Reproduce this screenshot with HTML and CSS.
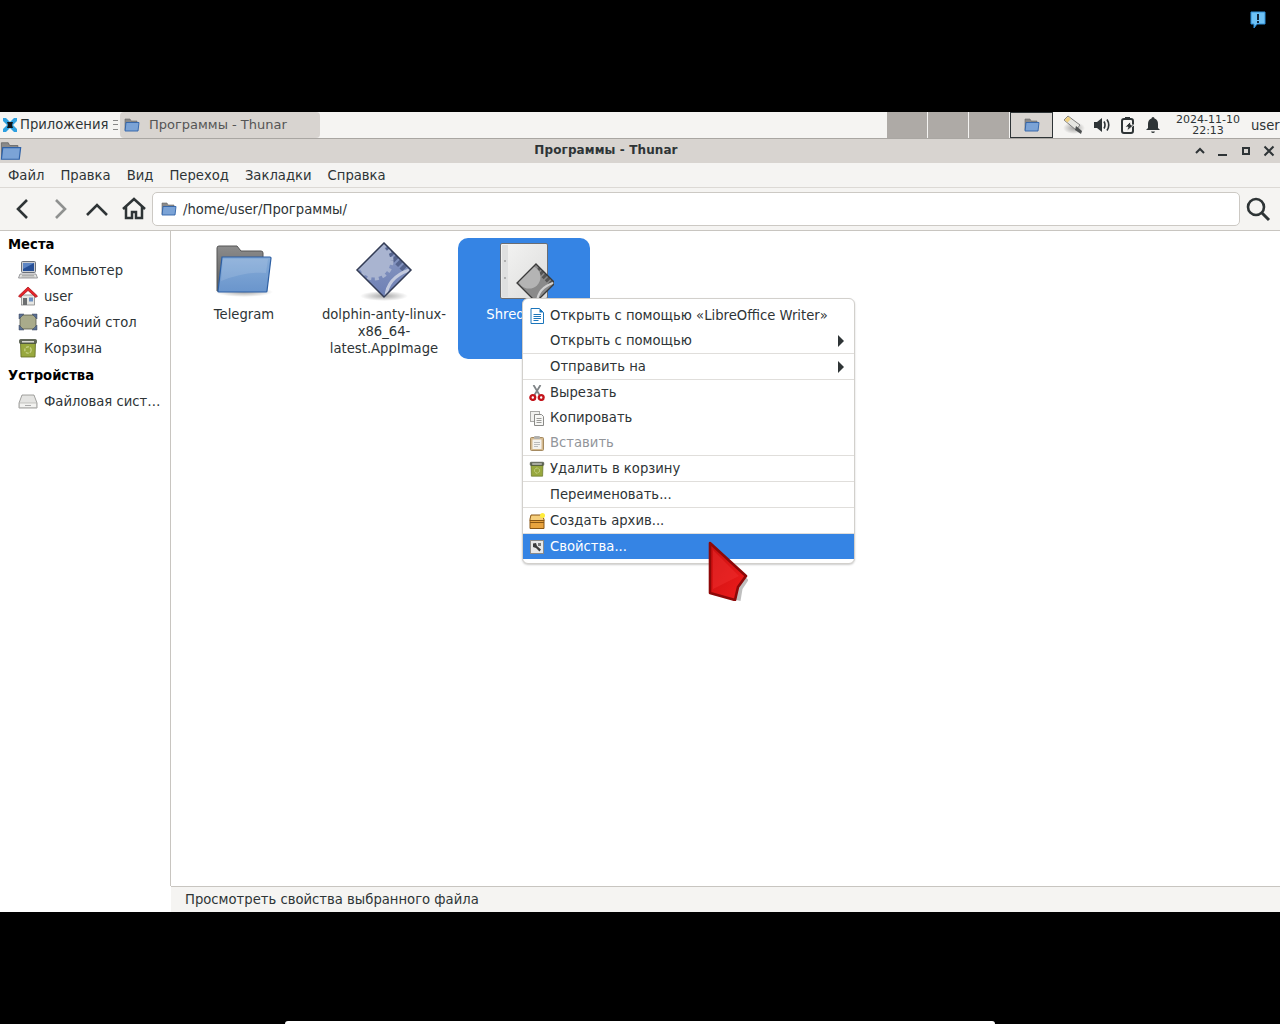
FILE: index.html
```html
<!DOCTYPE html>
<html lang="en">

<head>
    <meta charset="UTF-8">
    <meta name="viewport" content="width=device-width, initial-scale=1.0">
    <title>Программы - Thunar</title>
    <link rel="stylesheet" href="styles.css">
</head>

<body>

    <svg class="defs" xmlns="http://www.w3.org/2000/svg">
        <defs>
            <linearGradient id="gFolderBack" x1="0" y1="0" x2="0" y2="1">
                <stop offset="0" stop-color="#8c8c8c" />
                <stop offset="1" stop-color="#5c5c5c" />
            </linearGradient>
            <linearGradient id="gFolderFront" x1="0" y1="0" x2="0" y2="1">
                <stop offset="0" stop-color="#86acd8" />
                <stop offset="1" stop-color="#6a95cc" />
            </linearGradient>
            <linearGradient id="gApp" x1="0" y1="0" x2="0" y2="1">
                <stop offset="0" stop-color="#8d9cc4" />
                <stop offset="1" stop-color="#6d7fb4" />
            </linearGradient>
            <linearGradient id="gPage" x1="0" y1="0" x2="1" y2="1">
                <stop offset="0" stop-color="#f4f4f3" />
                <stop offset="1" stop-color="#dcdcdb" />
            </linearGradient>
            <linearGradient id="gRed" x1="0" y1="0" x2="1" y2="1">
                <stop offset="0" stop-color="#c81010" />
                <stop offset="1" stop-color="#f01c1c" />
            </linearGradient>
            <radialGradient id="gShadow">
                <stop offset="0" stop-color="#000" stop-opacity=".35" />
                <stop offset="1" stop-color="#000" stop-opacity="0" />
            </radialGradient>
            <clipPath id="clipDiamond">
                <path d="M30 1 57 28 30 55 3 28z" />
            </clipPath>
            <clipPath id="clipSmallDiamond">
                <path d="M42 22 61 41 42 60 23 41z" />
            </clipPath>
        </defs>

        <symbol id="i-folder" viewBox="0 0 60 60">
            <ellipse cx="30" cy="50" rx="29" ry="5" fill="url(#gShadow)" />
            <path d="M3 6q0-2 2-2h18l4 5h20q2 0 2 2v38H3z" fill="url(#gFolderBack)" stroke="#555" />
            <path d="M8 15h48q1 0 1 1l-4 33q0 1-1 1H5q-1 0-1-1z" fill="url(#gFolderFront)" stroke="#2d5fa3" stroke-width="1.2" />
            <path d="M9 17h45l-2 14q-20-2-45 8z" fill="#fff" opacity=".12" />
        </symbol>

        <symbol id="i-folder-sm" viewBox="0 0 16 16">
            <path d="M1 2h5l1 2h6v9H1z" fill="#8a8a8a" stroke="#666" stroke-width=".6" />
            <path d="M2 5.500h13l-1 8.500H1z" fill="#7ba3d6" stroke="#2f62a8" stroke-width=".9" />
        </symbol>

        <symbol id="i-app" viewBox="0 0 60 60">
            <ellipse cx="30" cy="54" rx="24" ry="5" fill="url(#gShadow)" />
            <path d="M30 1 57 28 30 55 3 28z" fill="url(#gApp)" />
            <g clip-path="url(#clipDiamond)">
                <path d="M31 7 51 27" stroke="#56658f" stroke-width="7" stroke-dasharray="4 2" />
                <circle cx="20" cy="19" r="17.500" fill="none" stroke="#a9b4d0" stroke-width="4" stroke-dasharray="4 3.500" />
                <circle cx="20" cy="19" r="16.500" fill="#a9b4d0" />
                <path d="M32 55Q33 36 55 28" fill="none" stroke="#c3cade" stroke-width="3" />
            </g>
            <path d="M30 1 57 28 30 55 3 28z" fill="none" stroke="#333c55" stroke-width="1.500" />
        </symbol>

        <symbol id="i-doc" viewBox="0 0 60 60">
            <rect x="6.500" y="1.500" width="47" height="55" rx="1.500" fill="url(#gPage)" stroke="#6a6d72" />
            <rect x="8" y="3" width="6" height="52" fill="#dfe0e0" />
            <circle cx="11" cy="19" r=".9" fill="#999" />
            <circle cx="11" cy="36" r=".9" fill="#999" />
            <path d="M42 22 61 41 42 60 23 41z" fill="#8a8a8a" />
            <g clip-path="url(#clipSmallDiamond)">
                <path d="M43 27 57 41" stroke="#555" stroke-width="5" stroke-dasharray="3 1.500" />
                <circle cx="35" cy="35" r="11.500" fill="#b4b4b4" />
                <path d="M43 60Q44 46 59 41" fill="none" stroke="#d0d0d0" stroke-width="2.200" />
            </g>
            <path d="M42 22 61 41 42 60 23 41z" fill="none" stroke="#3a3a3a" stroke-width="1.300" />
        </symbol>

        <symbol id="i-monitor" viewBox="0 0 20 20">
            <rect x="3.500" y="1.500" width="14" height="11" rx="1" fill="#c8ccd2" stroke="#6b7079" />
            <rect x="5" y="3" width="11" height="8" fill="#264f96" />
            <path d="M5 3h11L5 9z" fill="#5d85c4" />
            <path d="M2 14h16l1.500 4H.500z" fill="#e1e2df" stroke="#85878a" stroke-width=".8" />
            <path d="M4 15.500h12M3.500 17h13" stroke="#999" stroke-width=".7" />
        </symbol>

        <symbol id="i-home" viewBox="0 0 20 20">
            <rect x="3.500" y="9" width="13" height="10" fill="#e6e6e3" stroke="#777" stroke-width=".7" />
            <rect x="5" y="12" width="4" height="7" fill="#6b6e70" />
            <rect x="11" y="11.500" width="4" height="4" fill="#6b8fc2" />
            <path d="M10 1 19.500 10 18 11.500 10 4.500 2 11.500.500 10z" fill="#e8242a" stroke="#a00f14" stroke-width=".7" />
        </symbol>

        <symbol id="i-desktop" viewBox="0 0 20 20">
            <rect x="2" y="3" width="16" height="14" rx="3" fill="#a9ab8b" stroke="#55584a" stroke-width=".8" />
            <path d="M1 2h5L1 7zM19 2h-5l5 5zM1 18h5l-5-5zM19 18h-5l5-5z" fill="#5a6f92" stroke="#39465c" stroke-width=".5" />
        </symbol>

        <symbol id="i-trash" viewBox="0 0 20 20">
            <path d="M2.500 5h15l-.5 14H3z" fill="#98a83e" stroke="#5f6b22" stroke-width=".8" />
            <rect x="1.500" y="1.500" width="17" height="4" rx="1" fill="#5f6655" stroke="#444a3c" stroke-width=".7" />
            <rect x="4" y="3" width="12" height="1.500" fill="#d8d8d0" />
            <circle cx="10" cy="12" r="3.200" fill="none" stroke="#c9d48a" stroke-width="1.200" stroke-dasharray="3 1.200" />
        </symbol>

        <symbol id="i-drive" viewBox="0 0 20 20">
            <path d="M4 4h12l3 8v5H1v-5z" fill="#e4e4e2" stroke="#8a8a88" stroke-width=".8" />
            <path d="M1.500 12h17v4.500h-17z" fill="#f2f2f0" stroke="#a8a8a6" stroke-width=".6" />
            <path d="M7 14.500h6" stroke="#aaa" />
        </symbol>

        <symbol id="i-writer" viewBox="0 0 16 16">
            <path d="M2 .500h8.500L14.500 4.500V15.500H2z" fill="#fff" stroke="#1b75bb" />
            <path d="M10.500 .500V4.500H14.500z" fill="#1b75bb" />
            <path d="M4.500 6.500h7.500M4.500 8.500h7.500M4.500 10.500h7.500M4.500 12.500h5" stroke="#1b75bb" />
        </symbol>

        <symbol id="i-cut" viewBox="0 0 16 16">
            <path d="M4.500 0 10.500 10M11.500 0 5.500 10" stroke="#7f8487" stroke-width="1.800" />
            <circle cx="3.800" cy="12.500" r="2.400" fill="none" stroke="#c4151c" stroke-width="2.400" />
            <circle cx="12.200" cy="12.500" r="2.400" fill="none" stroke="#c4151c" stroke-width="2.400" />
        </symbol>

        <symbol id="i-copy" viewBox="0 0 16 16">
            <rect x="1.500" y="1.500" width="9" height="10" fill="#f0f0ee" stroke="#a8a8a6" />
            <path d="M5.500 4.500h7l2 2v9h-9z" fill="#f7f7f5" stroke="#8a8a88" />
            <path d="M7.500 8.500h5M7.500 10.500h5M7.500 12.500h5" stroke="#9a9a98" />
        </symbol>

        <symbol id="i-paste" viewBox="0 0 16 16">
            <rect x="1.500" y="2.500" width="13" height="13" rx="1" fill="#d4b98e" stroke="#a58a60" />
            <rect x="3.500" y="4.500" width="9" height="9.500" fill="#f4f2ee" />
            <rect x="5" y="1" width="6" height="3" rx="1" fill="#b0b0ad" />
            <path d="M5 7.500h6M5 9.500h6M5 11.500h4" stroke="#bbb" />
        </symbol>

        <symbol id="i-archive" viewBox="0 0 16 16">
            <path d="M1 7h14v8.500H1z" fill="#e8a33e" stroke="#8a5614" />
            <path d="M2 2h10l3 4v1.500H1V6z" fill="#f6cf7c" stroke="#8a5614" />
            <path d="M1 9.500h14" stroke="#8a5614" />
            <circle cx="13.500" cy="2.500" r="2.500" fill="#ffec3a" />
        </symbol>

        <symbol id="i-props" viewBox="0 0 16 16">
            <rect x="1.500" y="1.500" width="13" height="13" fill="#e8e8e8" stroke="#8a8a8a" />
            <path d="M4 4.500 7 4l1 3 4 3.500-1.500 2L7 9 4 8z" fill="#3c3c3c" />
            <rect x="9" y="4" width="3" height="3" fill="#777" />
        </symbol>

        <symbol id="i-cursor" viewBox="0 0 40 60">
            <path d="M4 4 39 37 33 46 31 58 4 52z" fill="#000" opacity=".25" transform="translate(1.500 2)" />
            <path d="M2 2 38 35 30 46 27 59 2 52z" fill="url(#gRed)" stroke="#8e0808" stroke-width="2.600" stroke-linejoin="round" />
            <path d="M5 9 31 35 5 48z" fill="#f23434" opacity=".4" />
        </symbol>
    </svg>

    <div class="top-black">
        <svg class="notify" width="16" height="18" viewBox="0 0 16 18">
            <path d="M1 1h14v12H7l-3 4v-4H1z" fill="#6ec1f5" stroke="#2c8ed8" />
            <rect x="7" y="3" width="2" height="6" fill="#10243a" />
            <rect x="7" y="10" width="2" height="2" fill="#10243a" />
        </svg>
    </div>

    <div class="panel">
        <div class="apps">
            <svg class="logo" width="16" height="16" viewBox="0 0 16 16">
                <path d="M1 1 4 1 8 5 12 1 15 1 15 4 11 8 15 12 15 15 12 15 8 11 4 15 1 15 1 12 5 8 1 4z" fill="#2d9fe0" />
                <path d="M5 5h6l-1 3 1 3H5l1-3z" fill="#10141a" />
            </svg>
            <span>Приложения</span>
        </div>
        <div class="grip"></div>
        <div class="task">
            <svg class="ico16"><use href="#i-folder-sm" /></svg>
            <span>Программы - Thunar</span>
        </div>
        <div class="panel-right">
            <div class="pager">
                <div class="ws"></div>
                <div class="ws"></div>
                <div class="ws"></div>
                <div class="ws active"><svg class="ico16"><use href="#i-folder-sm" /></svg></div>
            </div>
            <div class="tray">
                <svg width="24" height="24" viewBox="0 0 24 24">
                    <ellipse cx="13" cy="15" rx="11" ry="6" fill="url(#gShadow)" />
                    <path d="M3 7 7 3 19 12 15 17z" fill="#e6e6e2" stroke="#7c7c7c" />
                    <path d="M15 13 21 18 20 21 14 17z" fill="#4c4f50" />
                    <path d="M3.500 7 7 3.500 10 6 6.500 9.500z" fill="#efd182" />
                </svg>
                <svg width="18" height="18" viewBox="0 0 18 18">
                    <path d="M1 6h3l5-4v14l-5-4H1z" fill="#2e3436" />
                    <path d="M11 5.500q2 3.500 0 7M14 3.500q3.500 5.500 0 11" fill="none" stroke="#2e3436" stroke-width="1.600" />
                </svg>
                <svg width="16" height="18" viewBox="0 0 16 18">
                    <rect x="2" y="3" width="11" height="14" rx="2" fill="none" stroke="#2e3436" stroke-width="2" />
                    <rect x="5" y="1" width="5" height="2" fill="#2e3436" />
                    <path d="M10 6 5 11h3l-1 4 7-6h-3z" fill="#2e3436" stroke="#f5f4f2" stroke-width=".8" />
                </svg>
                <svg width="16" height="18" viewBox="0 0 16 18">
                    <path d="M8 1q1.500 0 1.500 1.500Q13 3.500 13 8v4l2 2H1l2-2V8q0-4.500 3.500-5.500Q6.500 1 8 1z" fill="#2e3436" />
                    <path d="M6 15.500h4q-.5 1.500-2 1.500t-2-1.500z" fill="#2e3436" />
                </svg>
            </div>
            <div class="clock">2024-11-10<br>22:13</div>
            <div class="panel-user">user</div>
        </div>
    </div>

    <div class="window">
        <div class="titlebar">
            <svg class="title-ico" width="22" height="22"><use href="#i-folder-sm" /></svg>
            <div class="title-text">Программы - Thunar</div>
            <div class="title-btns">
                <svg width="12" height="12" viewBox="0 0 12 12"><path d="M2 8 6 4 10 8" fill="none" stroke="#2e3436" stroke-width="2" /></svg>
                <svg width="12" height="12" viewBox="0 0 12 12"><rect x="1" y="9" width="9" height="2" fill="#2e3436" /></svg>
                <svg width="12" height="12" viewBox="0 0 12 12"><rect x="3" y="3" width="6" height="6" fill="none" stroke="#2e3436" stroke-width="2" /></svg>
                <svg width="12" height="12" viewBox="0 0 12 12"><path d="M1.500 1.500 10.500 10.500M10.500 1.500 1.500 10.500" stroke="#2e3436" stroke-width="2" /></svg>
            </div>
        </div>

        <div class="menubar">
            <span>Файл</span>
            <span>Правка</span>
            <span>Вид</span>
            <span>Переход</span>
            <span>Закладки</span>
            <span>Справка</span>
        </div>

        <div class="toolbar">
            <div class="tool"><svg width="24" height="24" viewBox="0 0 24 24"><path d="M16 3 7 12 16 21" fill="none" stroke="#2e3436" stroke-width="2.600" /></svg></div>
            <div class="tool"><svg width="24" height="24" viewBox="0 0 24 24"><path d="M8 3 17 12 8 21" fill="none" stroke="#8f9190" stroke-width="2.600" /></svg></div>
            <div class="tool"><svg width="24" height="24" viewBox="0 0 24 24"><path d="M2 18 12 8 22 18" fill="none" stroke="#2e3436" stroke-width="2.600" /></svg></div>
            <div class="tool"><svg width="26" height="24" viewBox="0 0 26 24"><path d="M2 12 13 2 24 12M5 10v11h6v-6h4v6h6V10" fill="none" stroke="#2e3436" stroke-width="2.500" /></svg></div>
            <div class="location">
                <svg class="ico16"><use href="#i-folder-sm" /></svg>
                <span>/home/user/Программы/</span>
            </div>
            <svg class="search" width="26" height="26" viewBox="0 0 26 26">
                <circle cx="11" cy="11" r="8" fill="none" stroke="#2e3436" stroke-width="2.600" />
                <path d="M17 17 24 24" stroke="#2e3436" stroke-width="3" />
            </svg>
        </div>

        <div class="main">
            <div class="sidebar">
                <div class="side-head">Места</div>
                <div class="side-row"><svg class="ico20"><use href="#i-monitor" /></svg><span>Компьютер</span></div>
                <div class="side-row"><svg class="ico20"><use href="#i-home" /></svg><span>user</span></div>
                <div class="side-row"><svg class="ico20"><use href="#i-desktop" /></svg><span>Рабочий стол</span></div>
                <div class="side-row"><svg class="ico20"><use href="#i-trash" /></svg><span>Корзина</span></div>
                <div class="side-head devices">Устройства</div>
                <div class="side-row"><svg class="ico20"><use href="#i-drive" /></svg><span>Файловая сист…</span></div>
            </div>

            <div class="files">
                <div class="file">
                    <svg class="ico60"><use href="#i-folder" /></svg>
                    <div class="file-name">Telegram</div>
                </div>
                <div class="file">
                    <svg class="ico60"><use href="#i-app" /></svg>
                    <div class="file-name">dolphin-anty-linux-x86_64-latest.AppImage</div>
                </div>
                <div class="file selected">
                    <svg class="ico60"><use href="#i-doc" /></svg>
                    <div class="file-name">Shred</div>
                </div>
            </div>
        </div>

        <div class="statusbar">Просмотреть свойства выбранного файла</div>
    </div>

    <div class="bottom-black">
        <div class="bottom-bar"></div>
    </div>

    <div class="ctx-menu">
        <div class="ctx-row"><svg class="ico16"><use href="#i-writer" /></svg><span>Открыть с помощью «LibreOffice Writer»</span></div>
        <div class="ctx-row sep"><i class="ico16"></i><span>Открыть с помощью</span><b class="arrow"></b></div>
        <div class="ctx-row sep"><i class="ico16"></i><span>Отправить на</span><b class="arrow"></b></div>
        <div class="ctx-row"><svg class="ico16"><use href="#i-cut" /></svg><span>Вырезать</span></div>
        <div class="ctx-row"><svg class="ico16"><use href="#i-copy" /></svg><span>Копировать</span></div>
        <div class="ctx-row sep disabled"><svg class="ico16"><use href="#i-paste" /></svg><span>Вставить</span></div>
        <div class="ctx-row sep"><svg class="ico16"><use href="#i-trash" /></svg><span>Удалить в корзину</span></div>
        <div class="ctx-row sep"><i class="ico16"></i><span>Переименовать...</span></div>
        <div class="ctx-row sep"><svg class="ico16"><use href="#i-archive" /></svg><span>Создать архив...</span></div>
        <div class="ctx-row hover"><svg class="ico16"><use href="#i-props" /></svg><span>Свойства...</span></div>
    </div>

    <svg class="cursor" width="40" height="60"><use href="#i-cursor" /></svg>

</body>

</html>
```

FILE: styles.css
```css
* {
    box-sizing: border-box;
}

body {
    margin: 0;
    width: 1280px;
    height: 1024px;
    overflow: hidden;
    background-color: #000;
    display: flex;
    flex-direction: column;
    font-family: "DejaVu Sans", sans-serif;
    font-size: 13.2px;
    color: #2e3436;
}

svg {
    display: block;
    flex-shrink: 0;
}

.defs {
    position: absolute;
    width: 0;
    height: 0;
}

.ico16 {
    display: block;
    width: 16px;
    height: 16px;
    flex-shrink: 0;
}

.ico20 {
    width: 20px;
    height: 20px;
}

.ico60 {
    width: 60px;
    height: 60px;
}

/* top and bottom of the screen */

.top-black {
    height: 112px;
    display: flex;
    justify-content: flex-end;
    padding: 11px 14px 0 0;
}

.bottom-black {
    flex: 1;
    display: flex;
    justify-content: center;
    align-items: flex-end;
}

.bottom-bar {
    width: 710px;
    height: 3px;
    background-color: #fff;
    border-radius: 10px 10px 0 0;
}

/* panel */

.panel {
    height: 27px;
    display: flex;
    align-items: flex-start;
    background-color: #f5f4f2;
    border-bottom: 1px solid #a9a6a2;
}

.apps {
    height: 26px;
    width: 113px;
    display: flex;
    align-items: center;
    gap: 2px;
    padding: 0 0 1px 2px;
}

.grip {
    width: 5px;
    height: 10px;
    margin: 8px 2px 0 0;
    border-top: 1px solid #888;
    border-bottom: 1px solid #888;
    background: linear-gradient(#f5f4f2 3px, #888 3px, #888 4px, #f5f4f2 4px);
}

.task {
    width: 200px;
    height: 26px;
    display: flex;
    align-items: center;
    gap: 9px;
    padding: 0 0 1px 4px;
    background-color: #d8d4d0;
    border-radius: 4px;
    color: #555;
    font-size: 13px;
}

.panel-right {
    margin-left: auto;
    display: flex;
    align-items: center;
    height: 26px;
}

.pager {
    display: flex;
    gap: 1px;
    height: 26px;
}

.ws {
    width: 40px;
    background-color: #aeaaa6;
}

.ws.active {
    width: 43px;
    background-color: #d8d4d0;
    border: 1px solid #2e3436;
    display: flex;
    align-items: center;
    justify-content: center;
}

.tray {
    display: flex;
    align-items: center;
    gap: 9px;
    margin-left: 8px;
}

.tray svg:first-child {
    margin-right: -1px;
}

.clock {
    width: 66px;
    margin-left: 14px;
    font-size: 11px;
    line-height: 11px;
    text-align: center;
    white-space: nowrap;
}

.panel-user {
    margin-left: 10px;
    width: 29px;
    white-space: nowrap;
}

/* window */

.window {
    height: 773px;
    display: flex;
    flex-direction: column;
    background-color: #fff;
}

.titlebar {
    height: 24px;
    display: flex;
    align-items: center;
    background-color: #d8d4d0;
}

.title-text {
    flex: 1;
    padding-bottom: 3px;
    text-align: center;
    font-size: 12px;
    font-weight: bold;
    letter-spacing: .1px;
}

.title-btns {
    width: 90px;
    display: flex;
    justify-content: flex-end;
    gap: 11px;
    padding-right: 5px;
}

.menubar {
    height: 25px;
    display: flex;
    align-items: center;
    gap: 16px;
    padding-left: 8px;
    background-color: #f5f4f2;
    border-bottom: 1px solid #dcd9d5;
}

.toolbar {
    height: 43px;
    display: flex;
    align-items: center;
    padding-left: 4px;
    background-color: #f5f4f2;
    border-bottom: 1px solid #c8c5c0;
}

.tool {
    width: 37px;
    display: flex;
    justify-content: center;
}

.location {
    width: 1088px;
    height: 34px;
    display: flex;
    align-items: center;
    gap: 6px;
    padding-left: 8px;
    background-color: #fff;
    border: 1px solid #ccc9c4;
    border-radius: 5px;
}

.search {
    margin-left: 5px;
}

.main {
    flex: 1;
    display: flex;
}

.sidebar {
    width: 171px;
    border-right: 1px solid #c8c5c0;
}

.side-head {
    height: 26px;
    display: flex;
    align-items: center;
    padding-left: 8px;
    font-weight: bold;
    color: #000;
}

.side-head.devices {
    margin-top: 1px;
}

.side-row {
    height: 26px;
    display: flex;
    align-items: center;
    gap: 6px;
    padding-left: 18px;
}

.files {
    flex: 1;
    display: flex;
    align-items: flex-start;
    gap: 8px;
    padding: 7px 0 0 7px;
}

.file {
    width: 132px;
    height: 121px;
    display: flex;
    flex-direction: column;
    align-items: center;
    padding: 4px 3px 0;
    border-radius: 10px;
}

.file-name {
    margin-top: 4px;
    line-height: 17px;
    text-align: center;
    overflow-wrap: anywhere;
}

.file.selected {
    background-color: #3584e4;
    color: #fff;
}

/* the rest of this name is hidden by the menu */
.file.selected .file-name {
    padding-right: 37px;
}

.statusbar {
    height: 26px;
    display: flex;
    align-items: center;
    margin-left: 171px;
    padding-left: 14px;
    background-color: #f5f4f2;
    border-top: 1px solid #c8c5c0;
}

/* context menu */

.ctx-menu {
    position: absolute;
    left: 522px;
    top: 298px;
    width: 333px;
    padding: 4px 0;
    background-color: #fff;
    border: 1px solid #d2d0cc;
    border-radius: 6px;
    box-shadow: 0 1px 2px rgba(0, 0, 0, .2);
}

.ctx-row {
    height: 25px;
    display: flex;
    align-items: center;
    gap: 5px;
    padding: 0 10px 0 6px;
}

.ctx-row.sep {
    height: 26px;
    border-bottom: 1px solid #e0dedb;
}

.ctx-row.disabled {
    color: #92959a;
}

.ctx-row.hover {
    background-color: #3584e4;
    color: #fff;
}

.arrow {
    margin-left: auto;
    border-left: 6px solid #2e3436;
    border-top: 6px solid transparent;
    border-bottom: 6px solid transparent;
}

.cursor {
    position: absolute;
    left: 708px;
    top: 541px;
}

.notify {
    display: block;
}
```
